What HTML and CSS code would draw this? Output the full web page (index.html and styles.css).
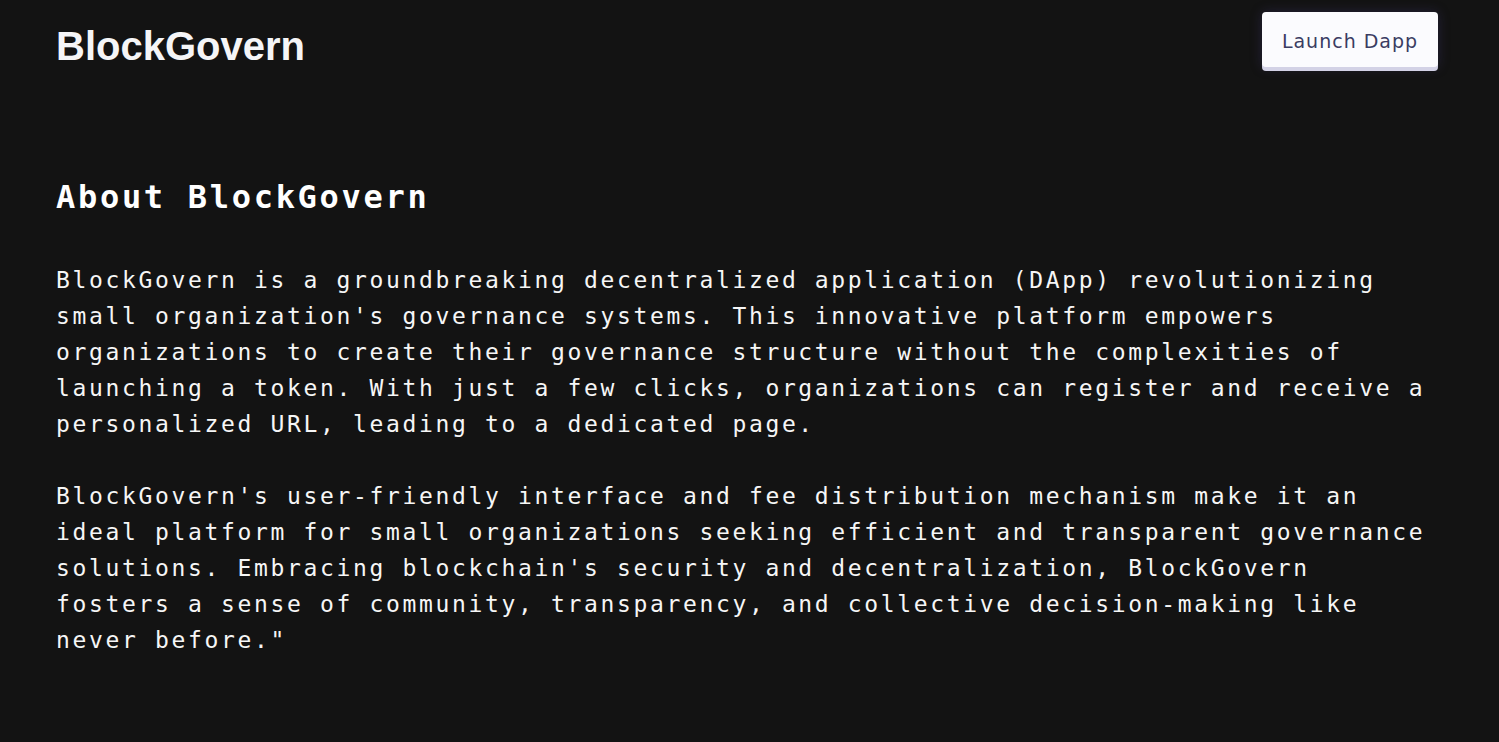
FILE: index.html
```html
<!DOCTYPE html>
<html lang="en">
<head>
<meta charset="utf-8">
<title>BlockGovern</title>
<link rel="stylesheet" href="styles.css">
</head>
<body>
<header class="topbar">
  <h1 class="logo">BlockGovern</h1>
  <button class="launch-btn">Launch Dapp</button>
</header>
<main class="about">
  <h2 class="about-title">About BlockGovern</h2>
  <p class="about-text">BlockGovern is a groundbreaking decentralized application (DApp) revolutionizing small organization's governance systems. This innovative platform empowers organizations to create their governance structure without the complexities of launching a token. With just a few clicks, organizations can register and receive a personalized URL, leading to a dedicated page.</p>
  <p class="about-text">BlockGovern's user-friendly interface and fee distribution mechanism make it an ideal platform for small organizations seeking efficient and transparent governance solutions. Embracing blockchain's security and decentralization, BlockGovern fosters a sense of community, transparency, and collective decision-making like never before."</p>
</main>
</body>
</html>
```
FILE: styles.css
```css
html, body {
  margin: 0;
  padding: 0;
  background: #131313;
}

body {
  color: #f4f4f4;
  min-height: 742px;
}

.topbar {
  display: flex;
  justify-content: space-between;
  align-items: flex-start;
  padding: 12px 61px 0 56px;
}

.logo {
  margin: 11px 0 0 0;
  font-family: "Liberation Sans", Arial, sans-serif;
  font-weight: 700;
  font-size: 40px;
  line-height: 46px;
  color: #f5f5f7;
}

.launch-btn {
  height: 55px;
  width: 176px;
  padding: 3px 0 0 0;
  border: none;
  border-radius: 4px;
  background: #fbfbfe;
  color: #3a3c62;
  font-family: "DejaVu Sans", sans-serif;
  font-size: 19px;
  letter-spacing: 1px;
  box-shadow: 0 4px 0 #d3d2e6, 0 0 12px rgba(70, 60, 130, 0.35);
  cursor: pointer;
}

.about {
  padding: 108px 61px 0 56px;
}

.about-title {
  margin: 0 0 45px 0;
  font-family: "DejaVu Sans Mono", monospace;
  font-weight: 700;
  font-size: 32px;
  line-height: 40px;
  letter-spacing: 2.7px;
  color: #ffffff;
}

.about-text {
  margin: 0 0 36px 0;
  font-family: "DejaVu Sans Mono", monospace;
  font-size: 23px;
  line-height: 36px;
  letter-spacing: 2.65px;
  color: #f6f6f6;
}
```
